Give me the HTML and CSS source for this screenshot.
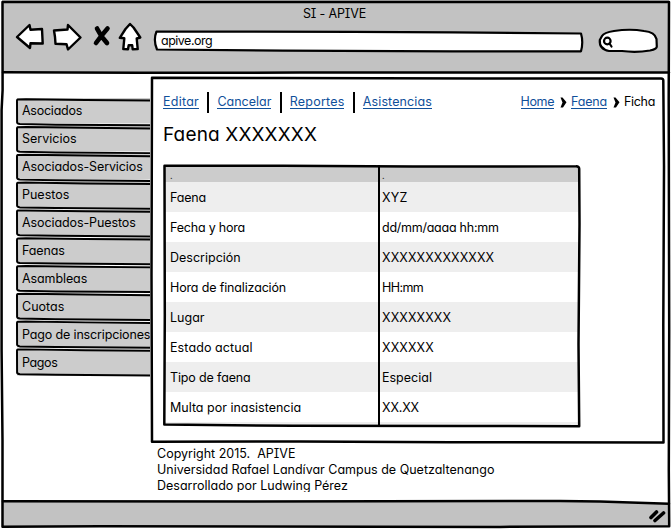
FILE: index.html
```
<!DOCTYPE html>
<html lang="es">
<head>
<meta charset="utf-8">
<title>SI - APIVE</title>
<link rel="stylesheet" href="styles.css">
</head>
<body>
<div class="window">
  <header class="chrome">
    <div class="title tight-15">SI - APIVE</div>
    <div class="toolbar">
      <svg class="nav" width="140" height="36" viewBox="10 20 140 36">
        <path class="icon" d="M17 37 L29.500 25 L30.500 29.800 L42 29 L42.700 43.500 L30.500 43.200 L30 48 Z"/>
        <path class="icon" d="M54 30.500 L67.500 29.500 L68 25 L80.500 37.500 L68 49.500 L66.500 44.200 L55.500 43.800 L55 37 Z"/>
        <path class="cross" d="M97 28.500 Q101 37 107 43 M107.500 28.500 Q101 36 96 43"/>
        <path class="icon" d="M130 24 L133.500 27.500 L140.300 37.500 L136.700 38.500 L137.700 49 L132.700 49.300 L132.200 45.300 L128.700 45.300 L128 49.200 L123.300 49 L124.300 38.300 L119.800 37.800 L125.500 29 Z"/>
      </svg>
      <div class="address">
        <svg class="sketch" viewBox="0 0 432 24"><path class="outline paper" d="M3.500 2.500 L200 2.800 L300 3.400 L428 4.500 Q430.500 13 428 22.300 L300 22.300 L130 21.700 L4 20.500 Q0 11 3.500 2.500 Z"/></svg>
        <span class="tight-50">apive.org</span>
      </div>
      <svg class="search" width="62" height="28" viewBox="597 27 62 28">
        <path class="outline paper" d="M602 36 Q604 32.500 614 31 Q630 28.500 644 31 Q655 32 656.500 39 L656.800 46.500 Q657 49 650 50.500 Q636 52.800 622 51 L609 51 Q599 49 599.800 40 Z"/>
        <circle class="lens" cx="607.300" cy="41" r="3.300"/>
        <path class="lens" d="M609.500 43.500 L611.500 46.500"/>
      </svg>
    </div>
  </header>

  <main class="page">
    <nav class="menu">
      <a class="tab tight-25">Asociados</a>
      <a class="tab">Servicios</a>
      <a class="tab tight-10">Asociados-Servicios</a>
      <a class="tab">Puestos</a>
      <a class="tab tight-10">Asociados-Puestos</a>
      <a class="tab tight-10">Faenas</a>
      <a class="tab tight-10">Asambleas</a>
      <a class="tab">Cuotas</a>
      <a class="tab tight-15">Pago de inscripciones</a>
      <a class="tab tight-40">Pagos</a>
      <svg class="sketch" viewBox="0 0 136 281">
        <defs><path id="tab" class="line" d="M136 2.600 L70 2 L10 1.200 L2 1.400 Q.700 1.600 1 4 L1.100 24.500 Q1.300 26 4 26.200 L40 26.800 L136 27.500"/></defs>
        <use href="#tab"/><use href="#tab" y="28"/><use href="#tab" y="56"/><use href="#tab" y="84"/><use href="#tab" y="112"/>
        <use href="#tab" y="140"/><use href="#tab" y="168"/><use href="#tab" y="196"/><use href="#tab" y="224"/><use href="#tab" y="252"/>
      </svg>
    </nav>

    <div class="column">
      <section class="panel">
        <svg class="sketch" viewBox="0 0 514 367"><path class="frame" d="M2 1.800 L130 1.900 L330 2.600 L511 2.500 Q513.500 2.600 513.300 5 L514 90 L513.300 250 L513.500 366.500 L300 366.300 L150 365.500 L2 365.700 L1.500 200 Z"/></svg>
        <div class="bar">
          <div class="links">
            <a class="wide-25">Editar</a><a>Cancelar</a><a class="wide-20">Reportes</a><a class="wide-10">Asistencias</a>
          </div>
          <div class="crumbs">
            <a class="tight-40">Home</a>
            <svg width="7" height="11" viewBox="0 0 7 11"><path d="M.500 .500 L2.500 .500 L6.500 5.200 L3 10.500 L.500 10.500 L2.500 5.500 Z"/></svg>
            <a class="tight-20">Faena</a>
            <svg width="7" height="11" viewBox="0 0 7 11"><path d="M.500 .500 L2.500 .500 L6.500 5.200 L3 10.500 L.500 10.500 L2.500 5.500 Z"/></svg>
            <span class="tight-30">Ficha</span>
          </div>
        </div>
        <h1>Faena XXXXXXX</h1>
        <div class="sheet">
          <div class="row head"><span>.</span><span>.</span></div>
          <div class="row"><span class="tight-20">Faena</span><span class="wide-30">XYZ</span></div>
          <div class="row"><span class="tight-20">Fecha y hora</span><span class="tight-25">dd/mm/aaaa hh:mm</span></div>
          <div class="row"><span>Descripción</span><span class="wide-10">XXXXXXXXXXXXX</span></div>
          <div class="row"><span class="tight-15">Hora de finalización</span><span class="tight-60">HH:mm</span></div>
          <div class="row"><span>Lugar</span><span class="wide-10">XXXXXXXX</span></div>
          <div class="row"><span class="wide-10">Estado actual</span><span class="wide-10">XXXXXX</span></div>
          <div class="row"><span class="tight-15">Tipo de faena</span><span>Especial</span></div>
          <div class="row"><span>Multa por inasistencia</span><span class="tight-15">XX.XX</span></div>
          <svg class="sketch" viewBox="0 0 417 263"><path class="frame" d="M1.500 1.700 L120 1.800 L250 2.500 L413 2.300 Q416.300 2.200 416.200 5 L416.500 60 L415.500 180 L416.200 262.300 L300 262 L130 261.800 L1.300 260.500 L1.800 150 Z"/><path class="line" d="M216 2 V261"/></svg>
        </div>
      </section>
      <div class="legal">
        <div>Copyright 2015.&nbsp; APIVE</div>
        <div>Universidad Rafael Landívar Campus de Quetzaltenango</div>
        <div>Desarrollado por Ludwing Pérez</div>
      </div>
    </div>
  </main>

  <footer class="status">
    <svg width="18" height="14" viewBox="648 509 18 14"><path class="grip" d="M651 517.500 L656.500 512 M655 520.500 L663.500 513"/></svg>
  </footer>

  <svg class="sketch" viewBox="0 0 671 529">
    <path class="gap" d="M670 503.500 L600 501.500 L560 501 V500 H670 Z"/>
    <path class="frame" d="M2.500 2 L669 2 L668.700 100 L669.200 330 L668.800 470 L669.200 526.300 L500 526.900 L100 526.300 L2.500 526.700 L2.500 440 L1.600 350 L1.600 110 L2.600 90 Z"/>
    <path class="frame" d="M3 72.300 L140 72.800 L300 72.600 L669 72.400"/>
    <path class="frame" d="M3 501.300 L250 501.400 L560 501 L600 501.500 L669 503.700"/>
  </svg>
</div>
</body>
</html>
```
FILE: styles.css
```
* { box-sizing: border-box; }
body {
  margin: 0;
  background: #fff;
  color: #000;
  font: 12.5px/17px Inter, "Open Sans", sans-serif;
  font-feature-settings: "cv11", "cv08";
}

.window {
  position: relative;
  display: flex;
  flex-direction: column;
  width: 671px;
  height: 529px;
  overflow: hidden;
}

/* Hand-drawn outlines laid over their boxes */
.sketch {
  position: absolute;
  inset: 0;
  width: 100%;
  height: 100%;
  overflow: visible;
  pointer-events: none;
}
.frame, .line, .outline, .icon {
  fill: none;
  stroke: #000;
  stroke-linejoin: round;
  stroke-linecap: round;
}
.frame { stroke-width: 2.5; }
.line { stroke-width: 2; }
.outline { stroke-width: 2.2; }
.icon { fill: #fff; stroke-width: 2.4; }
.paper { fill: #fff; }
.gap { fill: #fff; }
.cross, .grip { fill: none; stroke: #000; stroke-width: 4.6; stroke-linecap: round; }
.grip { stroke-width: 3.6; }
.lens { fill: none; stroke: #000; stroke-width: 2.2; stroke-linecap: round; }

/* Browser header */
.chrome {
  flex: none;
  height: 73px;
  margin: 0 2px;
  padding-top: 5px;
  background: #c2c2c2;
}
.title { padding-right: 2px; text-align: center; line-height: 17px; }
.toolbar { display: flex; align-items: flex-start; padding-left: 8px; }
.nav { flex: none; margin-top: -2px; }
.address {
  position: relative;
  width: 432px;
  height: 24px;
  margin: 7px 12px 0 3px;
  padding: 3px 0 0 8px;
}
.address span { position: relative; }
.search { flex: none; margin-top: 5px; }

/* Page body */
.page { flex: 1; display: flex; padding: 3px 0 0 16px; min-height: 0; }
.menu {
  position: relative;
  flex: none;
  width: 135px;
  height: 281px;
  margin-top: 21px;
}
.tab {
  display: block;
  height: 27px;
  margin: 0 0 1px 1px;
  padding-left: 5px;
  background: linear-gradient(#ccc, #ccc) 0 1px / 100% 25.5px no-repeat;
  line-height: 27px;
  white-space: nowrap;
}
.column { flex: 1; min-width: 0; }
.panel {
  position: relative;
  width: 514px;
  height: 367px;
  margin-left: -1px;
  padding: 15px 9px 0 13px;
  background: #fff;
}
.bar { position: relative; display: flex; justify-content: space-between; height: 22px; }
.links { display: flex; }
.links a { margin-top: 2px; }
.links a + a { margin-left: 18.4px; position: relative; }
.links a + a::before {
  content: "";
  position: absolute;
  left: -10px;
  top: -1px;
  width: 2px;
  height: 21px;
  background: #000;
}
.bar a {
  display: block;
  height: 16px;
  border-bottom: 1px solid #10509a;
  color: #10509a;
  line-height: 17px;
}
.crumbs { display: flex; align-items: flex-start; padding-top: 2px; }
.crumbs svg { margin: 4px 4px 0 6px; }

h1 {
  position: relative;
  margin: 10px 0 0;
  font-size: 19px;
  font-weight: 400;
  line-height: 23px;
  letter-spacing: .15px;
}
.sheet {
  position: relative;
  width: 417px;
  height: 263px;
  margin-top: 18px;
  padding: 2px 2px 0;
  background: linear-gradient(#eee, #eee) 0 258px / 415px 3px no-repeat;
}
.row {
  display: grid;
  grid-template-columns: 213px 1fr;
  height: 30px;
  line-height: 31px;
  white-space: nowrap;
}
.row span { padding-left: 4px; }
.row span:first-child { padding-left: 5px; }
.row:nth-child(even) { background: #eee; }
.row.head { height: 16px; background: #ccc; color: #333; font-size: 9px; line-height: 20px; }

.legal { height: 46px; margin: 3px 0 0 6px; overflow: hidden; line-height: 16px; }

.status {
  flex: none;
  display: flex;
  justify-content: flex-end;
  height: 26px;
  margin: 0 2px 2px;
  padding: 8px 3px 0 0;
  background: #c2c2c2;
}

/* Tracking */
.tight-60 { letter-spacing: -.6px; }
.tight-50 { letter-spacing: -.5px; }
.tight-40 { letter-spacing: -.4px; }
.tight-30 { letter-spacing: -.3px; }
.tight-25 { letter-spacing: -.25px; }
.tight-20 { letter-spacing: -.2px; }
.tight-15 { letter-spacing: -.15px; }
.tight-10 { letter-spacing: -.1px; }
.wide-10 { letter-spacing: .1px; }
.wide-20 { letter-spacing: .2px; }
.wide-25 { letter-spacing: .25px; }
.wide-30 { letter-spacing: .3px; }
```
